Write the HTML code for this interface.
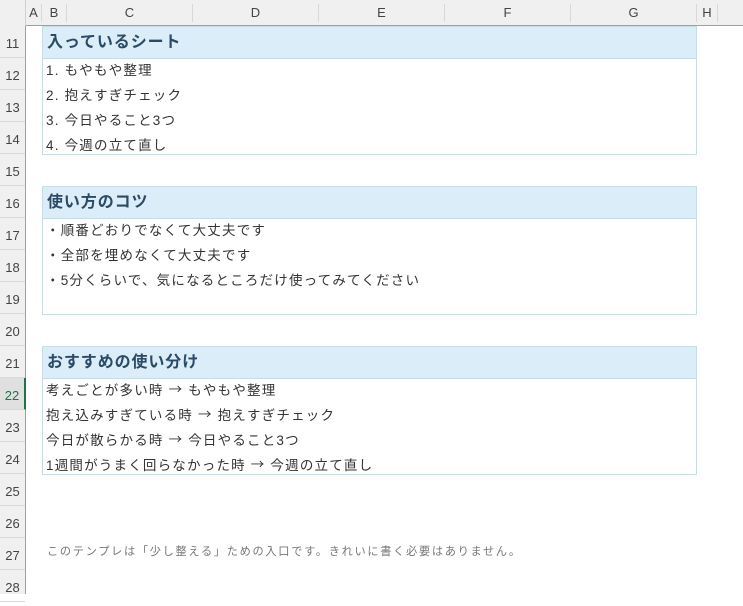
<!DOCTYPE html>
<html><head><meta charset="utf-8"><style>
body{margin:0;width:743px;height:594px;overflow:hidden;background:#fff;font-family:"Liberation Sans","Noto Sans CJK JP",sans-serif;position:relative}
.colh{position:absolute;top:0;height:26px;background:#f0f0f0;border-bottom:1px solid #a0a0a0;box-sizing:border-box;font-size:13px;color:#444;text-align:center;line-height:26px}
.colh span{position:absolute;top:4px;height:18px;border-right:1px solid #d8d8d8;box-sizing:border-box;line-height:18px}
.rowh{position:absolute;left:0;width:26px;background:#f0f0f0;border-right:1px solid #a0a0a0;box-sizing:border-box}
.rn{position:absolute;left:0;width:25px;text-align:center;font-size:13px;color:#444;border-bottom:1px solid #d8d8d8;box-sizing:border-box;line-height:36px!important}
.box{position:absolute;left:42px;width:655px;border:1px solid #c9dbe6;box-sizing:border-box}
.hd{height:32px;background:#dcedfa;border-bottom:1px solid #c9dbe6;box-sizing:border-box;font-weight:bold;font-size:16px;color:#2a4a66;line-height:31px;padding-left:4px;letter-spacing:0.9px}
.ln{position:absolute;left:3px;font-size:13.5px;color:#333;line-height:20px;height:20px;white-space:nowrap;letter-spacing:1.2px}
.ar{font-family:"Noto Sans CJK JP",sans-serif;line-height:1;display:inline-block;vertical-align:top;margin-top:1px}
</style></head><body>
<div class="colh" style="left:0;width:743px">
<span style="left:26px;width:16px">A</span>
<span style="left:42px;width:25px">B</span>
<span style="left:67px;width:126px">C</span>
<span style="left:193px;width:126px">D</span>
<span style="left:319px;width:126px">E</span>
<span style="left:445px;width:126px">F</span>
<span style="left:571px;width:126px">G</span>
<span style="left:697px;width:21px">H</span>
</div>
<div style="position:absolute;left:0;top:0;width:26px;height:26px;background:#f0f0f0;border-right:1px solid #d0d0d0;box-sizing:border-box"></div>
<div class="rowh" style="top:26px;height:568px">
<div class="rn" style="top:0;height:32px">11</div>
<div class="rn" style="top:32px;height:32px">12</div>
<div class="rn" style="top:64px;height:32px">13</div>
<div class="rn" style="top:96px;height:32px">14</div>
<div class="rn" style="top:128px;height:32px">15</div>
<div class="rn" style="top:160px;height:32px">16</div>
<div class="rn" style="top:192px;height:32px">17</div>
<div class="rn" style="top:224px;height:32px">18</div>
<div class="rn" style="top:256px;height:32px">19</div>
<div class="rn" style="top:288px;height:32px">20</div>
<div class="rn" style="top:320px;height:32px">21</div>
<div class="rn" style="top:352px;height:32px;background:#e0e0e0;color:#217346;border-right:2px solid #217346;width:26px">22</div>
<div class="rn" style="top:384px;height:32px">23</div>
<div class="rn" style="top:416px;height:32px">24</div>
<div class="rn" style="top:448px;height:32px">25</div>
<div class="rn" style="top:480px;height:32px">26</div>
<div class="rn" style="top:512px;height:32px">27</div>
<div class="rn" style="top:544px;height:32px">28</div>
</div>

<div class="box" style="top:26px;height:129px">
<div class="hd">入っているシート</div>
<div class="ln" style="top:34px">1. もやもや整理</div>
<div class="ln" style="top:59px">2. 抱えすぎチェック</div>
<div class="ln" style="top:84px">3. 今日やること3つ</div>
<div class="ln" style="top:109px">4. 今週の立て直し</div>
</div>
<div class="box" style="top:186px;height:129px">
<div class="hd">使い方のコツ</div>
<div class="ln" style="top:34px">・順番どおりでなくて大丈夫です</div>
<div class="ln" style="top:59px">・全部を埋めなくて大丈夫です</div>
<div class="ln" style="top:84px">・5分くらいで、気になるところだけ使ってみてください</div>
</div>
<div class="box" style="top:346px;height:129px">
<div class="hd">おすすめの使い分け</div>
<div class="ln" style="top:34px">考えごとが多い時 <span class="ar">→</span> もやもや整理</div>
<div class="ln" style="top:59px">抱え込みすぎている時 <span class="ar">→</span> 抱えすぎチェック</div>
<div class="ln" style="top:84px">今日が散らかる時 <span class="ar">→</span> 今日やること3つ</div>
<div class="ln" style="top:109px">1週間がうまく回らなかった時 <span class="ar">→</span> 今週の立て直し</div>
</div>
<div style="position:absolute;left:47px;top:543px;font-size:11.2px;letter-spacing:1.7px;color:#777;white-space:nowrap">このテンプレは「少し整える」ための入口です。きれいに書く必要はありません。</div>
</body></html>
